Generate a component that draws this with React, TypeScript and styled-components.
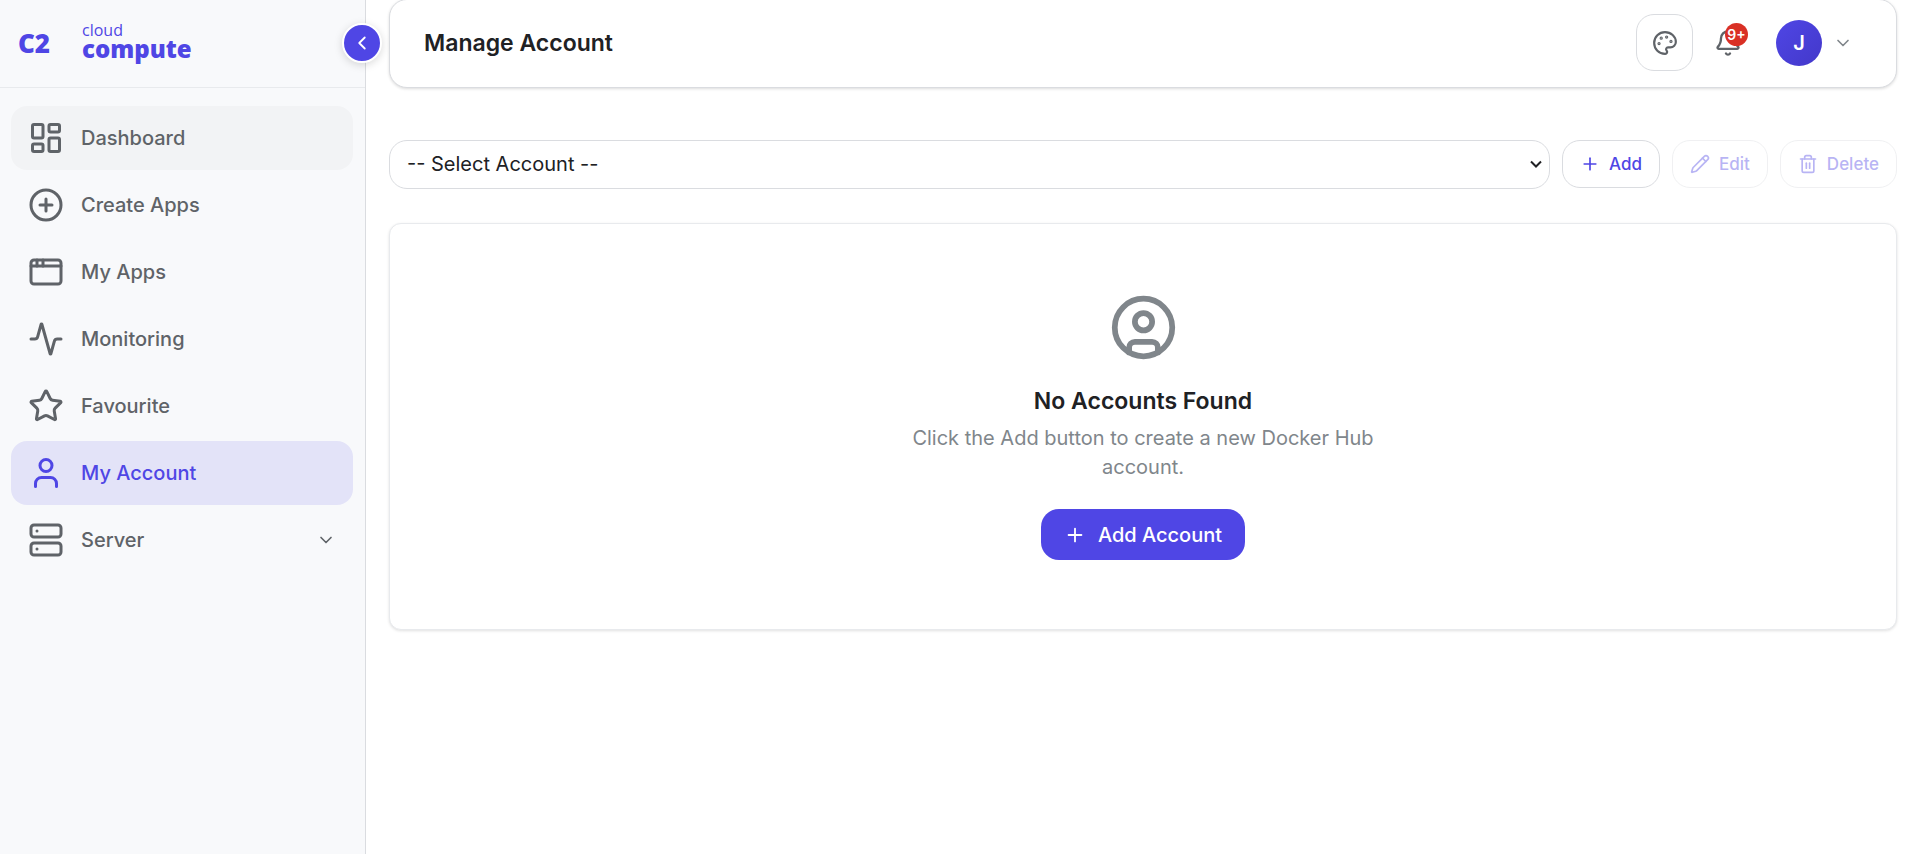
import React from 'react';
import styled, { createGlobalStyle, css } from 'styled-components';
import {
  Activity,
  AppWindow,
  Bell,
  ChevronDown,
  ChevronLeft,
  CirclePlus,
  CircleUser,
  LayoutDashboard,
  Palette,
  Pencil,
  Plus,
  Server,
  Star,
  Trash2,
  User,
} from 'lucide-react';

const GlobalStyle = createGlobalStyle`
  *, *::before, *::after { box-sizing: border-box; }
  body {
    margin: 0;
    background: #fff;
    color: #202124;
    font-family: Inter, "Liberation Sans", sans-serif;
    font-size: 20px;
  }
  button, select { font: inherit; cursor: pointer; }
  h1, h2, p, ul { margin: 0; padding: 0; }
`;

const Layout = styled.div`
  display: flex;
  min-height: 100vh;
`;

const Sidebar = styled.aside`
  position: relative;
  flex: 0 0 366px;
  background: #f8f9fb;
  border-right: 1px solid #dadce0;
`;

const Brand = styled.a`
  display: flex;
  align-items: center;
  height: 88px;
  padding: 0 18px 2px;
  border-bottom: 1px solid #e8eaed;
  color: #4f46e5;
  font-family: "Open Sans", "Noto Sans", sans-serif;
  text-decoration: none;
`;

const BrandMark = styled.span`
  width: 64px;
  font-family: "Noto Sans", sans-serif;
  font-size: 26px;
  font-weight: 900;
  line-height: 32px;
`;

const BrandName = styled.span`
  display: flex;
  flex-direction: column;
  padding-bottom: 6px;
`;

const BrandLight = styled.span`
  font-size: 16px;
  line-height: 18px;
`;

const BrandStrong = styled.strong`
  font-size: 24px;
  font-weight: 800;
  line-height: 20px;
`;

const CollapseButton = styled.button`
  position: absolute;
  top: 23px;
  right: -17px;
  z-index: 2;
  display: flex;
  align-items: center;
  justify-content: center;
  width: 40px;
  height: 40px;
  padding: 0;
  border: 2px solid #fff;
  border-radius: 50%;
  background: #4f46e5;
  color: #fff;
  box-shadow: 0 2px 8px rgba(0, 0, 0, 0.15);
`;

const NavList = styled.ul`
  display: flex;
  flex-direction: column;
  gap: 3px;
  padding: 18px 12px 18px 11px;
  list-style: none;
`;

const NavLink = styled.a<{ $state?: 'active' | 'hover' }>`
  display: flex;
  align-items: center;
  gap: 17px;
  height: 64px;
  padding: 0 17px;
  border-radius: 16px;
  color: #5f6368;
  font-weight: 500;
  text-decoration: none;
  ${({ $state }) => $state === 'hover' && css`background: #f2f3f5;`}
  ${({ $state }) => $state === 'active' && css`background: #e3e3f8; color: #4f46e5;`}
`;

const NavLabel = styled.span`
  flex: 1;
`;

const Main = styled.main`
  flex: 1;
  min-width: 0;
  padding: 0 12px 24px 23px;
`;

const TopBar = styled.header`
  display: flex;
  align-items: center;
  justify-content: space-between;
  height: 89px;
  margin-top: -1px;
  padding: 0 43px 2px 34px;
  border: 1px solid #dadce0;
  border-radius: 18px;
  background: #fff;
  box-shadow: 0 1px 3px rgba(0, 0, 0, 0.14);
`;

const PageTitle = styled.h1`
  font-size: 23px;
  font-weight: 600;
  line-height: 32px;
`;

const TopActions = styled.div`
  display: flex;
  align-items: center;
`;

const ThemeButton = styled.button`
  display: flex;
  align-items: center;
  justify-content: center;
  width: 57px;
  height: 57px;
  padding: 0;
  border: 1px solid #dadce0;
  border-radius: 18px;
  background: #fff;
  color: #5f6368;
`;

const BellButton = styled.button`
  position: relative;
  display: flex;
  margin: 0 34px 0 21px;
  padding: 0;
  border: 0;
  background: none;
  color: #5f6368;
`;

const Badge = styled.span`
  position: absolute;
  top: -6px;
  right: -6px;
  width: 23px;
  height: 23px;
  border-radius: 50%;
  background: #d93025;
  color: #fff;
  font-size: 14px;
  font-weight: 600;
  line-height: 23px;
  text-align: center;
`;

const ProfileButton = styled.button`
  display: flex;
  align-items: center;
  gap: 11px;
  padding: 0;
  border: 0;
  background: none;
  color: #80868b;
`;

const Avatar = styled.span`
  width: 46px;
  height: 46px;
  border-radius: 50%;
  background: linear-gradient(135deg, #4f46e5, #4338ca);
  color: #fff;
  font-weight: 600;
  line-height: 46px;
  text-align: center;
`;

const Toolbar = styled.div`
  display: flex;
  gap: 12px;
  margin-top: 52px;
`;

const SelectField = styled.div`
  position: relative;
  flex: 1;
  min-width: 0;
`;

const AccountSelect = styled.select`
  display: block;
  width: 100%;
  height: 49px;
  padding: 0 36px 2px 17px;
  border: 1px solid #dadce0;
  border-radius: 18px;
  background: #fff;
  color: #202124;
  appearance: none;
`;

const SelectArrow = styled.svg`
  position: absolute;
  top: 20px;
  right: 8px;
  width: 12px;
  height: 8px;
  fill: none;
  stroke: #202124;
  stroke-width: 2;
  pointer-events: none;
`;

const ToolButton = styled.button`
  display: flex;
  align-items: center;
  gap: 9px;
  height: 48px;
  padding: 0 17px;
  border: 1px solid #dadce0;
  border-radius: 18px;
  background: #fff;
  color: #4f46e5;
  font-size: 17px;
  font-weight: 500;
  &:disabled { opacity: 0.4; cursor: default; }
`;

const EmptyCard = styled.section`
  display: flex;
  flex-direction: column;
  align-items: center;
  margin-top: 34px;
  padding: 69px 24px;
  border: 1px solid #e8eaed;
  border-radius: 12px;
  background: #fff;
  box-shadow: 0 1px 3px rgba(0, 0, 0, 0.12);
  color: #80868b;
  text-align: center;
`;

const EmptyTitle = styled.h2`
  margin-top: 22px;
  color: #202124;
  font-size: 23px;
  font-weight: 600;
  line-height: 34px;
`;

const EmptyText = styled.p`
  max-width: 480px;
  margin-top: 6px;
  line-height: 29px;
`;

const PrimaryButton = styled.button`
  display: flex;
  align-items: center;
  gap: 12px;
  height: 51px;
  margin-top: 27px;
  padding: 0 23px;
  border: 0;
  border-radius: 18px;
  background: #4f46e5;
  color: #fff;
  font-weight: 500;
`;

const navItems = [
  { label: 'Dashboard', Icon: LayoutDashboard, state: 'hover' as const },
  { label: 'Create Apps', Icon: CirclePlus },
  { label: 'My Apps', Icon: AppWindow },
  { label: 'Monitoring', Icon: Activity },
  { label: 'Favourite', Icon: Star },
  { label: 'My Account', Icon: User, state: 'active' as const },
  { label: 'Server', Icon: Server, expandable: true },
];

export default function App() {
  return (
    <>
      <GlobalStyle />
      <Layout>
        <Sidebar>
          <Brand href="#">
            <BrandMark>C2</BrandMark>
            <BrandName>
              <BrandLight>cloud</BrandLight>
              <BrandStrong>compute</BrandStrong>
            </BrandName>
          </Brand>
          <CollapseButton aria-label="Collapse sidebar">
            <ChevronLeft size={22} />
          </CollapseButton>
          <nav>
            <NavList>
              {navItems.map(({ label, Icon, state, expandable }) => (
                <li key={label}>
                  <NavLink href="#" $state={state} aria-current={state === 'active' ? 'page' : undefined}>
                    <Icon size={36} />
                    <NavLabel>{label}</NavLabel>
                    {expandable && <ChevronDown size={20} />}
                  </NavLink>
                </li>
              ))}
            </NavList>
          </nav>
        </Sidebar>
        <Main>
          <TopBar>
            <PageTitle>Manage Account</PageTitle>
            <TopActions>
              <ThemeButton aria-label="Change theme">
                <Palette size={26} />
              </ThemeButton>
              <BellButton aria-label="Notifications">
                <Bell size={28} />
                <Badge>9+</Badge>
              </BellButton>
              <ProfileButton aria-label="Account menu">
                <Avatar>J</Avatar>
                <ChevronDown size={20} />
              </ProfileButton>
            </TopActions>
          </TopBar>
          <Toolbar>
            <SelectField>
              <AccountSelect aria-label="Account" defaultValue="">
                <option value="">-- Select Account --</option>
              </AccountSelect>
              <SelectArrow viewBox="0 0 12 8" aria-hidden="true">
                <path d="M1 1.5 6 6.5 11 1.5" />
              </SelectArrow>
            </SelectField>
            <ToolButton>
              <Plus size={20} />
              Add
            </ToolButton>
            <ToolButton disabled>
              <Pencil size={20} />
              Edit
            </ToolButton>
            <ToolButton disabled>
              <Trash2 size={20} />
              Delete
            </ToolButton>
          </Toolbar>
          <EmptyCard>
            <CircleUser size={69} />
            <EmptyTitle>No Accounts Found</EmptyTitle>
            <EmptyText>Click the Add button to create a new Docker Hub account.</EmptyText>
            <PrimaryButton>
              <Plus size={22} />
              Add Account
            </PrimaryButton>
          </EmptyCard>
        </Main>
      </Layout>
    </>
  );
}
